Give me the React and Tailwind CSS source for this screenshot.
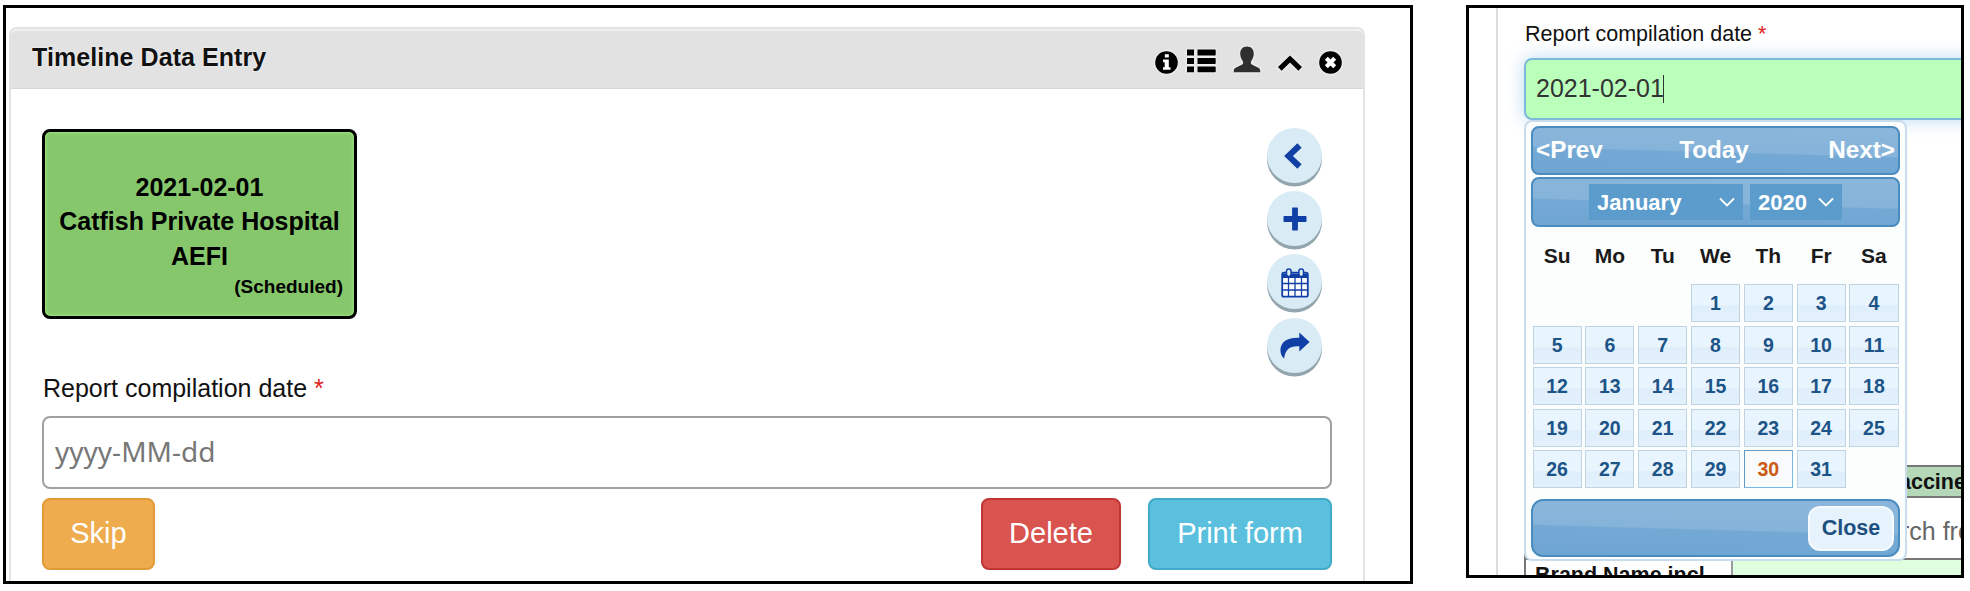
import React from "react";

const DAY_NAMES = ["Su", "Mo", "Tu", "We", "Th", "Fr", "Sa"];
const LEADING_BLANKS = 3;
const DAYS = Array.from({ length: 31 }, (_, i) => i + 1);
const TODAY = 30;

const BAR =
  "flex border-2 border-[#4a8cc0] bg-[linear-gradient(181.6deg,#8ab6db_0%,#86b3d9_52%,#73a9d4_54%,#6fa5d1_100%)]";

function HeaderIcons() {
  return (
    <div className="flex h-full pt-[15px] text-black [&>svg]:drop-shadow-[0_0_1.5px_white]">
      <svg className="mt-[5px] h-[23px] w-[23px]" viewBox="0 0 23 23">
        <circle cx="11.5" cy="11.5" r="11.3" fill="black" />
        <path d="M9.8 3.2h4v3.4h-4zM8 8.6h5.8v7.6h1.7v2.6H8v-2.6h1.7v-5H8z" fill="white" />
      </svg>
      <svg className="ml-[8px] mt-[3px] h-[24px] w-[30px]" viewBox="0 0 30 24">
        <path
          d="M1 .5h7v6H1zM11.5.5H29a.7.7 0 0 1 .7.7v4.6a.7.7 0 0 1-.7.7H11.5zM1 9h7v6H1zM11.5 9H29a.7.7 0 0 1 .7.7v4.6a.7.7 0 0 1-.7.7H11.5zM1 17.500h7v5.800H1zM11.5 17.500H29a.7.7 0 0 1 .7.7v4.400a.7.7 0 0 1-.7.7H11.5z"
          fill="black"
        />
      </svg>
      <svg className="ml-[17px] h-[27px] w-[28px]" viewBox="0 0 28 27">
        <path
          d="M14 .6c4.200 0 6.800 2.800 6.800 7 0 3.200-1.200 5.600-2.600 7.600-.6 1-.5 2.600.6 3.200l6.500 3.300c1.300.7 1.900 1.600 1.900 2.800v1.700H.8v-1.700c0-1.200.6-2.100 1.900-2.800l6.500-3.300c1.100-.6 1.200-2.200.6-3.200-1.400-2-2.600-4.400-2.600-7.600 0-4.200 2.600-7 6.800-7z"
          fill="#2f2f2f"
        />
      </svg>
      <svg className="ml-[16px] mt-[9px] h-[17px] w-[26px]" viewBox="0 0 26 17">
        <path d="M2.800 13.800 13 4l10.200 9.800" fill="none" stroke="black" strokeWidth="5.200" />
      </svg>
      <svg className="ml-[16px] mt-[5px] h-[23px] w-[23px]" viewBox="0 0 23 23">
        <circle cx="11.5" cy="11.5" r="11.3" fill="black" />
        <path d="m7.300 7.300 8.400 8.400m0-8.400-8.400 8.400" stroke="white" strokeWidth="4.200" />
      </svg>
    </div>
  );
}

function RoundButton({ children }) {
  return (
    <button className="flex h-[55px] w-[55px] items-center justify-center rounded-full bg-[#d9ecf6] text-[#103fa5] shadow-[0_3.5px_0.5px_#93a5ad]">
      {children}
    </button>
  );
}

function ActionColumn() {
  return (
    <div className="-mt-px flex flex-col gap-[8.2px]">
      <RoundButton>
        <svg className="mr-[3px] h-[28px] w-[20px]" viewBox="0 0 20 28">
          <path d="M16.500 3.500 5.500 14l11 10.500" fill="none" stroke="currentColor" strokeWidth="6" />
        </svg>
      </RoundButton>
      <RoundButton>
        <svg className="h-[24px] w-[24px]" viewBox="0 0 24 24">
          <path
            d="M9.700.5h4.600a.6.6 0 0 1 .6.6v8h8a.6.6 0 0 1 .6.6v4.600a.6.6 0 0 1-.6.6h-8v8a.6.6 0 0 1-.6.6H9.700a.6.6 0 0 1-.6-.6v-8h-8a.6.6 0 0 1-.6-.6V9.700a.6.6 0 0 1 .6-.6h8v-8a.6.6 0 0 1 .6-.6z"
            fill="currentColor"
          />
        </svg>
      </RoundButton>
      <RoundButton>
        <svg className="mt-[2px] h-[30px] w-[28px]" viewBox="0 0 28 30">
          <rect x="1.200" y="4.700" width="25.600" height="24" rx="1.800" fill="white" stroke="currentColor" strokeWidth="1.800" />
          <path d="M1 5.500h26V10H1z" fill="currentColor" />
          <rect x="5.500" y="1" width="4.600" height="7.500" rx="2.200" fill="#d9ecf6" stroke="currentColor" strokeWidth="1.500" />
          <rect x="17.900" y="1" width="4.600" height="7.500" rx="2.200" fill="#d9ecf6" stroke="currentColor" strokeWidth="1.500" />
          <path d="M7.500 10v18.500M14 10v18.500M20.500 10v18.500M1 15.500h26M1 22h26" stroke="currentColor" strokeWidth="1.300" />
        </svg>
      </RoundButton>
      <RoundButton>
        <svg className="h-[27px] w-[30px]" viewBox="0 0 30 27">
          <path
            d="M19.300.500 29.600 10 19.300 19.500V14.300C10.500 13.600 5.500 16.500 4.100 26.500 1.800 24.800.4 21.500.4 18 .8 9.500 7.800 5.300 19.300 5.700z"
            fill="currentColor"
          />
        </svg>
      </RoundButton>
    </div>
  );
}

function DataEntryPanel() {
  return (
    <section className="h-[579px] w-[1410px] shrink-0 overflow-hidden border-[3px] border-black bg-white pl-[3px] pt-[19px]">
      <div className="h-[557px] w-[1356px] rounded-t-lg border-2 border-b-0 border-[#e3e3e3] bg-white">
        <header className="flex h-[60px] justify-between rounded-t-md border-b border-t-2 border-b-[#d8d8d8] border-t-[#f1f1f1] bg-[#e2e2e2] pl-[21px] pr-[21px]">
          <h1 className="text-[25px] font-bold leading-[53px] tracking-[0.07px] text-[#111] [text-shadow:0_0_2px_white]">
            Timeline Data Entry
          </h1>
          <HeaderIcons />
        </header>
        <div className="flex justify-between pl-[31px] pr-[41px] pt-[40px]">
          <div className="h-[190px] w-[315px] rounded-lg border-[3px] border-black bg-[#86c76c] px-[11px] pt-[37.5px] text-center text-[25px] font-bold leading-[34.7px] text-black shadow-[inset_0_0_3px_1px_#9be67e]">
            <div>2021-02-01</div>
            <div className="-mx-3 whitespace-nowrap">Catfish Private Hospital</div>
            <div>AEFI</div>
            <div className="text-right text-[19px] leading-[26px]">(Scheduled)</div>
          </div>
          <ActionColumn />
        </div>
        <div className="ml-[31px] mr-[31px]">
          <label className="mt-[-1px] block h-[42px] pl-[1px] text-[25px] leading-[32px] text-[#111]">
            Report compilation date <span className="text-[#e02020]">*</span>
          </label>
          <div className="mt-[2px] h-[73px] w-[1290px] rounded-lg border-2 border-[#a0a0a0] bg-white pl-[11px] font-['Noto_Sans'] text-[28px] leading-[67px] text-[#777]">
            yyyy-MM-dd
          </div>
          <div className="mt-[9px] flex w-[1290px] text-[29px] leading-[66px] text-white">
            <button className="h-[72px] w-[113px] rounded-lg border-2 border-[#e09a38] bg-[#efac4e] pb-[2px]">Skip</button>
            <button className="ml-auto h-[72px] w-[140px] rounded-lg border-2 border-[#bf3632] bg-[#d9534f] pb-[2px]">Delete</button>
            <button className="ml-[27px] h-[72px] w-[184px] rounded-lg border-2 border-[#42a9c8] bg-[#5bc0de] pb-[2px]">Print form</button>
          </div>
        </div>
      </div>
    </section>
  );
}

function Caret() {
  return (
    <svg className="h-[10px] w-[16px]" viewBox="0 0 16 10">
      <path d="m1 1.500 7 7 7-7" fill="none" stroke="white" strokeWidth="1.800" />
    </svg>
  );
}

function DatePicker() {
  return (
    <div className="absolute left-[55px] top-[112px] h-[441px] w-[383px] rounded-lg border-2 border-[#c9dcec] bg-[#fcfdfd] px-[5px] pt-[4px]">
      <div className={`${BAR} h-[49px] items-center justify-between rounded-lg px-[3px] text-[24.3px] font-bold text-white`}>
        <span>&lt;Prev</span>
        <span className="-ml-[3px]">Today</span>
        <span>Next&gt;</span>
      </div>
      <div className={`${BAR} mt-[2px] h-[50px] items-center justify-center gap-[7px] rounded-lg text-[22px] font-bold text-white`}>
        <div className="flex h-[36px] w-[154px] items-center justify-between bg-[#5c9ccc] px-[8px]">
          January <Caret />
        </div>
        <div className="flex h-[36px] w-[92px] items-center justify-between bg-[#5c9ccc] px-[8px]">
          2020 <Caret />
        </div>
      </div>
      <div className="mt-[14px] grid grid-cols-7 gap-x-[3.7px] px-[1.5px] text-center text-[21px] font-bold leading-[30px] text-[#1a1a1a]">
        {DAY_NAMES.map((d) => (
          <div key={d}>{d}</div>
        ))}
      </div>
      <div className="mt-[13px] grid grid-cols-7 gap-x-[3.7px] gap-y-[3.5px] px-[1.5px] text-center text-[19.5px] font-bold leading-[36px]">
        {Array.from({ length: LEADING_BLANKS }, (_, i) => (
          <div key={`blank-${i}`} />
        ))}
        {DAYS.map((d) => (
          <div
            key={d}
            className={
              d === TODAY
                ? "h-[38px] border border-[#79b7e7] border-l-[#5f9ccb] border-t-[#5f9ccb] bg-[#f9fbfc] text-[#cc5a12]"
                : "h-[38px] border border-[#bfd3e3] bg-[linear-gradient(#e8f4fe_0%,#e8f4fe_55%,#dfeefb_58%,#e3f1fd_100%)] text-[#1d5487]"
            }
          >
            {d}
          </div>
        ))}
      </div>
      <div className={`${BAR} mt-[11px] h-[58px] items-center justify-end rounded-xl pr-[4px]`}>
        <button className="h-[45px] w-[86px] rounded-xl border-2 border-[#f4faff] bg-[#e6f2fc] text-[21.5px] font-bold leading-[40px] text-[#1d4f80]">
          Close
        </button>
      </div>
    </div>
  );
}

function DatePickerPanel() {
  return (
    <section className="relative ml-[53px] h-[573px] w-[498px] shrink-0 overflow-hidden border-[3px] border-black bg-white pl-[27px]">
      <div className="h-full border-l-2 border-[#dcdcdc] pl-[26px]">
        <label className="block h-[50px] pl-[1px] pt-[10px] text-[21.5px] leading-[32px] text-[#111]">
          Report compilation date <span className="text-[#e02020]">*</span>
        </label>
        <div className="flex h-[62px] w-[600px] items-center rounded-lg border-2 border-[#7db9d8] bg-[#baffba] pl-[10px] text-[25px] text-[#333] shadow-[0_0_18px_rgba(102,175,233,0.45)]">
          2021-02-01
          <span className="-ml-px h-[28px] w-[1.5px] bg-[#333]" />
        </div>
        <div className="mt-[345px] h-[33px] w-[600px] border-y-2 border-[#777] bg-[#b5d8b8] pl-[375px] text-[21.5px] font-bold leading-[31px] text-[#111]">
          accine
        </div>
        <div className="h-[62px] w-[600px] border-b-2 border-l-2 border-[#777] pl-[375px] text-[25px] leading-[66px] text-[#666]">
          rch from
        </div>
        <div className="flex h-[40px] w-[600px] border-l-2 border-[#777] bg-[#dfffdf] text-[21.5px] font-bold leading-[31px] text-[#111]">
          <div className="w-[207px] border-r-2 border-[#999] bg-white pl-[9px]">Brand Name incl</div>
        </div>
      </div>
      <DatePicker />
    </section>
  );
}

export default function App() {
  return (
    <main className="flex h-[591px] w-[1970px] overflow-hidden bg-white pl-[3px] pt-[5px] font-['Liberation_Sans',sans-serif]">
      <DataEntryPanel />
      <DatePickerPanel />
    </main>
  );
}
